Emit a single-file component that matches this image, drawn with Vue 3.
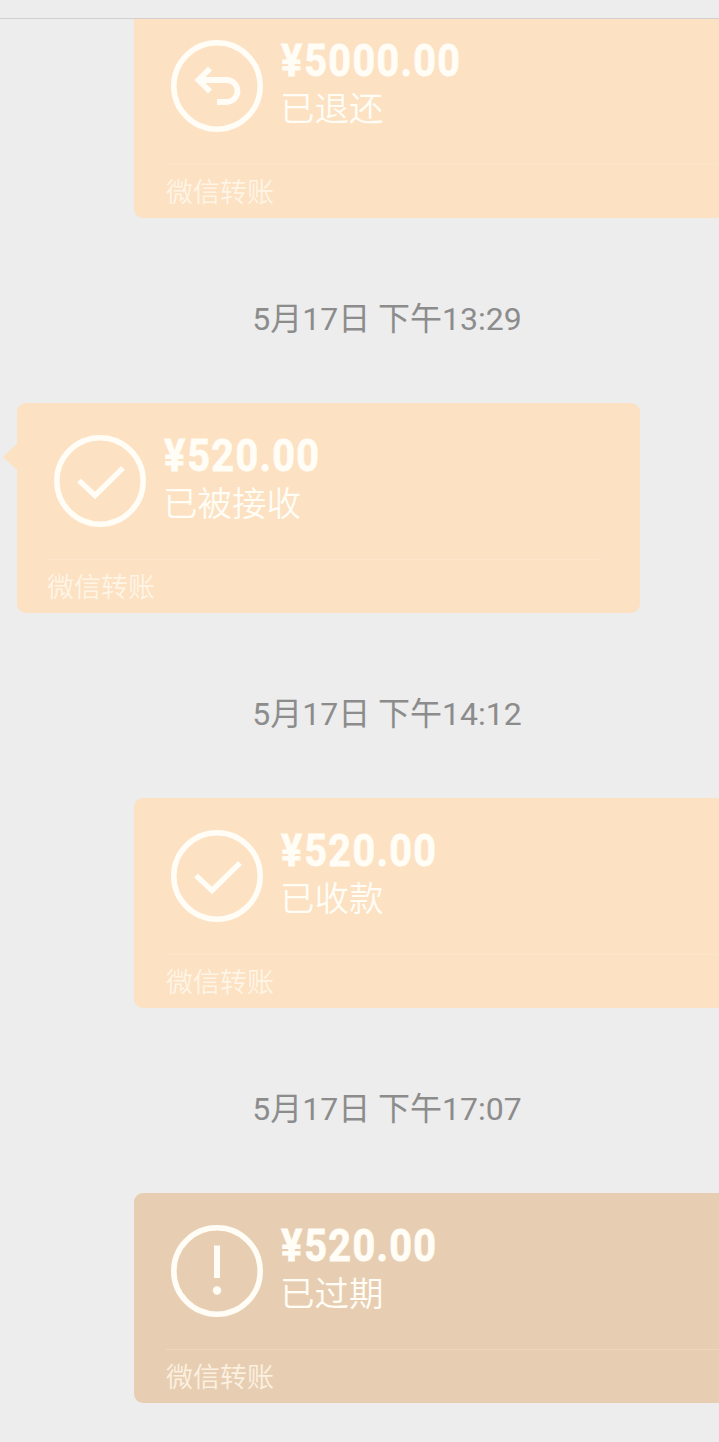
<template>
  <div class="chat">
    <div class="top-bar"></div>

    <div class="message-list">
      <template v-for="item in messages" :key="item.id">
        <div v-if="item.time" class="time">{{ item.time }}</div>
        <div class="message" :class="item.side">
          <div class="card" :class="{ expired: item.type === 'expired' }">
            <div class="card-main">
              <svg class="icon" viewBox="0 0 92 92" fill="none">
                <circle cx="46" cy="46" r="43.2" stroke-width="5.6" />
                <path v-if="item.type === 'returned'" d="M39 28.5 L27.5 40 L39 51.5 M28.5 40 H55.5 A11 11 0 0 1 55.5 62 H46" stroke-width="5.8" />
                <path v-else-if="item.type === 'received'" d="M25 45.5 L41 60.5 L69 33" stroke-width="5.4" />
                <template v-else>
                  <path d="M46 20.5 V53" stroke-width="6" />
                  <circle class="dot" cx="46" cy="65.5" r="4.2" />
                </template>
              </svg>
              <div class="info">
                <div class="amount"><span class="symbol">¥</span>{{ item.amount }}</div>
                <div class="status">{{ item.status }}</div>
              </div>
            </div>
            <div class="card-footer">微信转账</div>
          </div>
        </div>
      </template>
    </div>
  </div>
</template>

<script setup>
import { ref } from 'vue';

const messages = ref([
  { id: 1, time: '', side: 'right', type: 'returned', amount: '5000.00', status: '已退还' },
  { id: 2, time: '5月17日 下午13:29', side: 'left', type: 'received', amount: '520.00', status: '已被接收' },
  { id: 3, time: '5月17日 下午14:12', side: 'right', type: 'received', amount: '520.00', status: '已收款' },
  { id: 4, time: '5月17日 下午17:07', side: 'right', type: 'expired', amount: '520.00', status: '已过期' },
]);
</script>

<style>
body {
  margin: 0;
  background: #ededed;
}
</style>

<style scoped>
.chat {
  width: 719px;
  height: 1442px;
  overflow: hidden;
  display: flex;
  flex-direction: column;
  background: #ededed;
  font-family: Roboto, "Noto Sans CJK SC", sans-serif;
}

.top-bar {
  flex: none;
  height: 18px;
  border-bottom: 1px solid #d3d1cf;
}

/* 列表贴底，第一条消息的顶部被标题栏截断 */
.message-list {
  flex: 1;
  min-height: 0;
  overflow: hidden;
  display: flex;
  flex-direction: column;
  justify-content: flex-end;
  padding-bottom: 39px;
}

.time {
  flex: none;
  height: 185px;
  line-height: 203px;
  padding-left: 55px;
  text-align: center;
  font-size: 32px;
  color: #8c8c8c;
}

.message {
  flex: none;
  display: flex;
  padding-left: 134px;
}

.message.left {
  padding-left: 17px;
}

.card {
  position: relative;
  flex: none;
  box-sizing: border-box;
  width: 623px;
  height: 210px;
  padding: 32px 40px 0 37px;
  border-radius: 9px;
  background: #fce1c3;
  color: #fffdf5;
}

.right .card {
  padding-right: 36px;
}

.card.expired {
  background: #e7ceb3;
}

.left .card::before {
  content: '';
  position: absolute;
  left: -14px;
  top: 40px;
  width: 15px;
  height: 28px;
  background: #fce1c3;
  clip-path: polygon(0 50%, 100% 0, 100% 100%);
}

.card-main {
  display: flex;
  height: 124px;
}

.icon {
  flex: none;
  width: 92px;
  height: 92px;
  stroke: #fffdf5;
}

.icon .dot {
  fill: #fffdf5;
  stroke: none;
}

.info {
  margin-left: 17px;
}

.amount {
  height: 42px;
  line-height: 42px;
  font-size: 45px;
  font-weight: 700;
  letter-spacing: 1.5px;
  white-space: nowrap;
  transform: scaleX(0.88);
  transform-origin: left center;
  -webkit-text-stroke: 0.9px #fffdf5;
}

.symbol {
  margin-left: 1px;
  letter-spacing: 2.5px;
}

.status {
  margin-top: 1px;
  line-height: 46px;
  font-family: "Noto Sans CJK SC", sans-serif;
  font-size: 34.5px;
  font-weight: 350;
}

.card-footer {
  margin-left: -5px;
  padding-top: 2px;
  border-top: 1px solid #fde5cb;
  line-height: 48px;
  font-family: "Noto Sans CJK SC", sans-serif;
  font-size: 27px;
  font-weight: 350;
  color: #fff5e6;
}

.expired .card-footer {
  border-color: #edd6b9;
  color: #fcf1e0;
}

.left .card-footer {
  margin-left: -7px;
}
</style>
